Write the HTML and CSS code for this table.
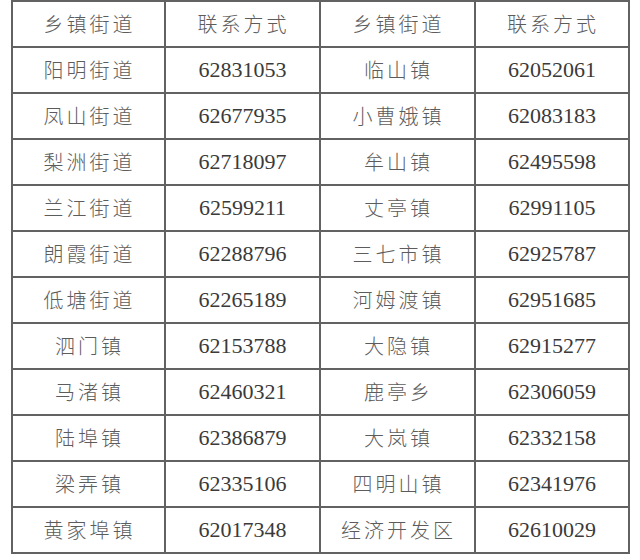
FILE: index.html
```html
<!DOCTYPE html>
<html lang="zh-CN">
<head>
<meta charset="utf-8">
<title>乡镇街道联系方式</title>
<link rel="stylesheet" href="styles.css">
</head>
<body>
<table class="contacts">
  <colgroup>
    <col class="c1"><col class="c2"><col class="c3"><col class="c4">
  </colgroup>
  <tr><td class="zh">乡镇街道</td><td class="zh">联系方式</td><td class="zh">乡镇街道</td><td class="zh">联系方式</td></tr>
  <tr><td class="zh">阳明街道</td><td class="num">62831053</td><td class="zh">临山镇</td><td class="num">62052061</td></tr>
  <tr><td class="zh">凤山街道</td><td class="num">62677935</td><td class="zh">小曹娥镇</td><td class="num">62083183</td></tr>
  <tr><td class="zh">梨洲街道</td><td class="num">62718097</td><td class="zh">牟山镇</td><td class="num">62495598</td></tr>
  <tr><td class="zh">兰江街道</td><td class="num">62599211</td><td class="zh">丈亭镇</td><td class="num">62991105</td></tr>
  <tr><td class="zh">朗霞街道</td><td class="num">62288796</td><td class="zh">三七市镇</td><td class="num">62925787</td></tr>
  <tr><td class="zh">低塘街道</td><td class="num">62265189</td><td class="zh">河姆渡镇</td><td class="num">62951685</td></tr>
  <tr><td class="zh">泗门镇</td><td class="num">62153788</td><td class="zh">大隐镇</td><td class="num">62915277</td></tr>
  <tr><td class="zh">马渚镇</td><td class="num">62460321</td><td class="zh">鹿亭乡</td><td class="num">62306059</td></tr>
  <tr><td class="zh">陆埠镇</td><td class="num">62386879</td><td class="zh">大岚镇</td><td class="num">62332158</td></tr>
  <tr><td class="zh">梁弄镇</td><td class="num">62335106</td><td class="zh">四明山镇</td><td class="num">62341976</td></tr>
  <tr><td class="zh">黄家埠镇</td><td class="num">62017348</td><td class="zh">经济开发区</td><td class="num">62610029</td></tr>
</table>
</body>
</html>
```

FILE: styles.css
```css
html, body {
  margin: 0;
  padding: 0;
  background: #ffffff;
}

.contacts {
  margin: 0 0 0 11px;
  width: 619px;
  table-layout: fixed;
  border-collapse: separate;
  border-spacing: 2px;
  background: #626262;
}

.c1 { width: 151px; }
.c2 { width: 153px; }
.c3 { width: 153px; }
.c4 { width: 152px; }

.contacts td {
  background: #ffffff;
  height: 44px;
  padding: 0;
  text-align: center;
  vertical-align: middle;
  white-space: nowrap;
}

.zh {
  font-family: "Noto Sans CJK SC", "Noto Sans", sans-serif;
  font-size: 20px;
  font-weight: 300;
  letter-spacing: 3px;
  text-indent: 2px;
  color: #5c5c5c;
  line-height: 1;
}

.num {
  font-family: "Liberation Serif", "DejaVu Serif", serif;
  font-size: 22px;
  color: #3a3a3a;
  line-height: 1;
}
```
